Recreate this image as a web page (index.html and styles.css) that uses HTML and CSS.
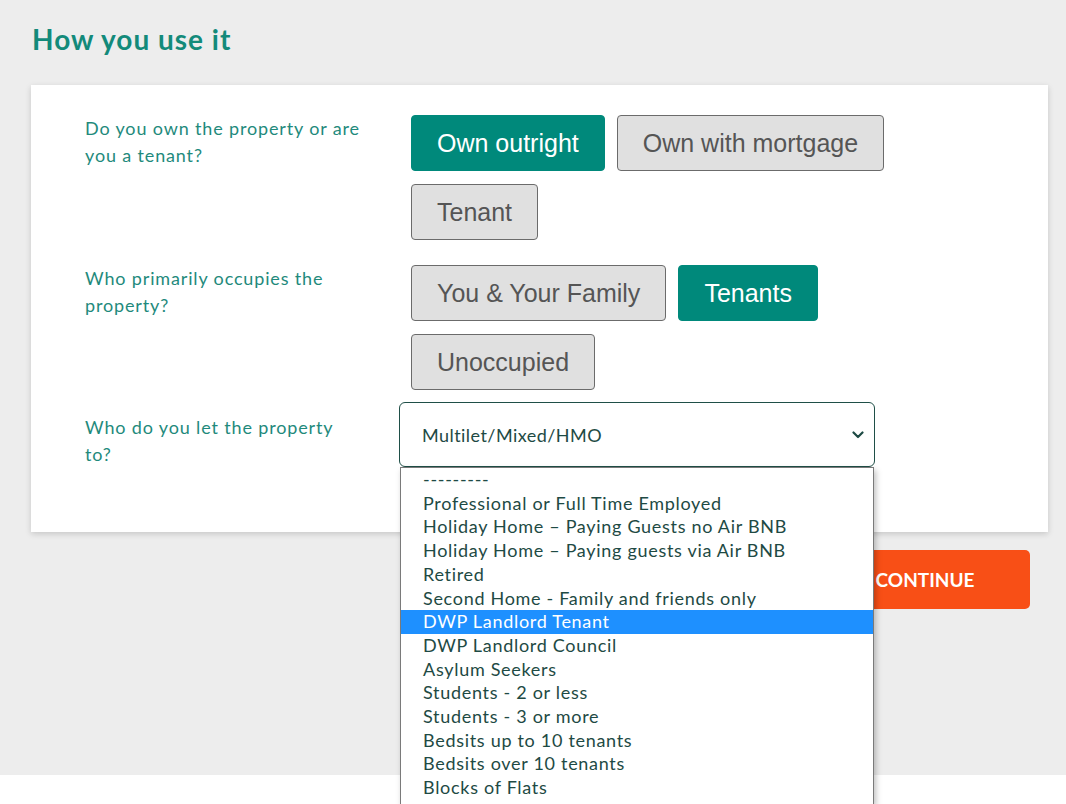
FILE: index.html
```html
<!DOCTYPE html>
<html>
<head>
    <title>How you use it</title>
    <link rel="stylesheet" href="styles.css">
</head>
<body>
    <div class="page">
        <h1>How you use it</h1>

        <div class="card">
            <div class="row">
                <div class="question">Do you own the property or are you a tenant?</div>
                <div class="choices">
                    <button class="choice active">Own outright</button>
                    <button class="choice">Own with mortgage</button>
                    <button class="choice">Tenant</button>
                </div>
            </div>

            <div class="row row-tight">
                <div class="question">Who primarily occupies the property?</div>
                <div class="choices">
                    <button class="choice">You &amp; Your Family</button>
                    <button class="choice active">Tenants</button>
                    <button class="choice">Unoccupied</button>
                </div>
            </div>

            <div class="row">
                <div class="question question-select">Who do you let the property to?</div>
                <div class="select-wrap">
                    <select class="select">
                        <option>Multilet/Mixed/HMO</option>
                    </select>
                    <svg class="chevron" width="12" height="8" viewBox="0 0 12 8">
                        <path d="M1.5 1.5 L6 6 L10.5 1.5" fill="none" stroke="#1e4a44" stroke-width="2.2" stroke-linecap="round" stroke-linejoin="round"/>
                    </svg>

                    <ul class="dropdown">
                        <li>---------</li>
                        <li>Professional or Full Time Employed</li>
                        <li>Holiday Home – Paying Guests no Air BNB</li>
                        <li>Holiday Home – Paying guests via Air BNB</li>
                        <li>Retired</li>
                        <li>Second Home - Family and friends only</li>
                        <li class="selected">DWP Landlord Tenant</li>
                        <li>DWP Landlord Council</li>
                        <li>Asylum Seekers</li>
                        <li>Students - 2 or less</li>
                        <li>Students - 3 or more</li>
                        <li>Bedsits up to 10 tenants</li>
                        <li>Bedsits over 10 tenants</li>
                        <li>Blocks of Flats</li>
                    </ul>
                </div>
            </div>
        </div>

        <div class="actions">
            <button class="continue-button">CONTINUE</button>
        </div>
    </div>
</body>
</html>
```

FILE: styles.css
```css
body {
    margin: 0;
    padding: 0;
    min-height: 804px;
    background-color: #fff;
    font-family: Lato, "Open Sans", sans-serif;
}

.page {
    background-color: #ededed;
    height: 775px;
    box-sizing: border-box;
    padding: 22px 18px 0 31px;
}

h1 {
    margin: 0 0 29px 1px;
    font-size: 28px;
    line-height: 34px;
    font-weight: 700;
    letter-spacing: 1px;
    color: #138a7a;
}

.card {
    background-color: #fff;
    padding: 30px 30px 64px 54px;
    box-shadow: 0 2px 6px rgba(0, 0, 0, 0.16);
}

.row {
    display: flex;
    margin-bottom: 25px;
}

.row-tight {
    margin-bottom: 12px;
}

.row:last-child {
    margin-bottom: 0;
}

.question {
    width: 277px;
    margin-right: 37px;
    font-size: 18px;
    line-height: 27px;
    letter-spacing: 0.85px;
    color: #1f8a7c;
    flex-shrink: 0;
}

.question-select {
    padding-top: 12px;
}

.choices {
    display: flex;
    flex-wrap: wrap;
    gap: 13px 12px;
    padding-left: 12px;
    width: 560px;
}

.choice {
    height: 56px;
    padding: 0 25px;
    font-family: "Liberation Sans", Arial, sans-serif;
    font-size: 25px;
    color: #555;
    background-color: #e0e0e0;
    border: 1px solid #6b6b6b;
    border-radius: 4px;
    cursor: pointer;
}

.choice.active {
    background-color: #00897b;
    border-color: #00897b;
    color: #fff;
}

.select-wrap {
    position: relative;
    width: 476px;
}

.select {
    appearance: none;
    width: 100%;
    height: 65px;
    padding: 0 22px;
    font-family: Lato, "Open Sans", sans-serif;
    font-size: 18px;
    letter-spacing: 0.45px;
    color: #1e4a44;
    background-color: #fff;
    border: 1px solid #1f4f47;
    border-radius: 6px;
}

.chevron {
    position: absolute;
    right: 11px;
    top: 29px;
}

.dropdown {
    position: absolute;
    top: 65px;
    left: 1px;
    width: 474px;
    box-sizing: border-box;
    height: 337px;
    overflow: hidden;
    margin: 0;
    padding: 0;
    list-style: none;
    background-color: #fff;
    border: 1px solid #7a7a7a;
    border-bottom: none;
    box-shadow: 2px 3px 6px rgba(0, 0, 0, 0.25);
    z-index: 10;
}

.dropdown li {
    padding-left: 22px;
    font-size: 18px;
    line-height: 23.7px;
    letter-spacing: 0.7px;
    color: #1e4a44;
    white-space: nowrap;
}

.dropdown li.selected {
    background-color: #1e90ff;
    color: #fff;
}

.actions {
    display: flex;
    justify-content: flex-end;
    padding: 18px 18px 0 0;
}

.continue-button {
    width: 210px;
    height: 59px;
    font-family: Lato, "Open Sans", sans-serif;
    font-size: 19px;
    font-weight: 700;
    color: #fff;
    background-color: #f84f16;
    border: none;
    border-radius: 5px;
    cursor: pointer;
}
```
